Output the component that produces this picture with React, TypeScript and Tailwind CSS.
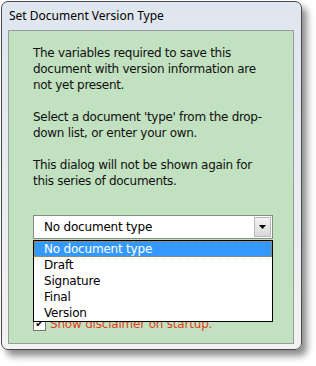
import React from "react";

export default function App() {
  const items = ["No document type", "Draft", "Signature", "Final", "Version"];
  return (
    <div className="w-[316px] h-[366px] bg-white pl-[1px] pt-[1px]" style={{ fontFamily: "Tahoma, 'DejaVu Sans', sans-serif" }}>
      <div className="w-[301px] h-[349px] rounded-[7px] border border-[#4a4a4a] bg-gradient-to-b from-[#dfe6f0] to-[#f2f2f2] shadow-[5px_6px_7px_rgba(0,0,0,0.45)] flex flex-col">
        <div className="h-[28px] pl-[7px] pt-[5px] text-[12px] text-black" style={{ fontFamily: "'Noto Sans', 'Open Sans', sans-serif" }}>
          Set Document Version Type
        </div>
        <div className="ml-[6px] mr-[7px] mb-[5px] flex-1 border border-[#9a9a9a] bg-[#c2e1c1] relative">
          <div className="pl-[24px] pt-[14px] pr-[6px] text-[12px] leading-[16px] tracking-[-0.3px] text-[#101010]">
            <p>The variables required to save this<br />document with version information are<br />not yet present.</p>
            <p className="mt-[16px]">Select a document 'type' from the drop-<br />down list, or enter your own.</p>
            <p className="mt-[16px]">This dialog will not be shown again for<br />this series of documents.</p>
          </div>
          <div className="ml-[24px] mt-[26px] w-[240px] h-[24px] border border-[#8a8a8a] bg-white flex items-center">
            <span className="flex-1 pl-[10px] text-[12px] tracking-[-0.2px] text-black">No document type</span>
            <div className="w-[17px] h-[20px] mr-[1px] border border-[#b8b8b8] bg-gradient-to-b from-[#f4f4f4] to-[#d8d8d8] flex items-center justify-center">
              <svg width="7" height="4" viewBox="0 0 7 4"><path d="M0 0h7L3.5 4z" fill="#000" /></svg>
            </div>
          </div>
          <div className="ml-[24px] mt-[76px] flex items-center gap-[4px]">
            <div className="w-[13px] h-[13px] border border-[#777] bg-white flex items-center justify-center text-[10px] leading-none">✔</div>
            <span className="text-[12px] tracking-[-0.2px] text-[#e0401a]">Show disclaimer on startup.</span>
          </div>
          <div className="absolute left-[24px] top-[209px] w-[240px] border border-black bg-white">
            {items.map((it, i) => (
              <div
                key={it}
                className={
                  i === 0
                    ? "h-[16px] leading-[14px] pl-[9px] text-[12px] tracking-[-0.2px] text-white bg-[#3399ff] border border-dotted border-[#e08000]"
                    : "h-[16px] leading-[16px] pl-[10px] text-[12px] tracking-[-0.2px] text-black"
                }
              >
                {it}
              </div>
            ))}
          </div>
        </div>
      </div>
    </div>
  );
}
